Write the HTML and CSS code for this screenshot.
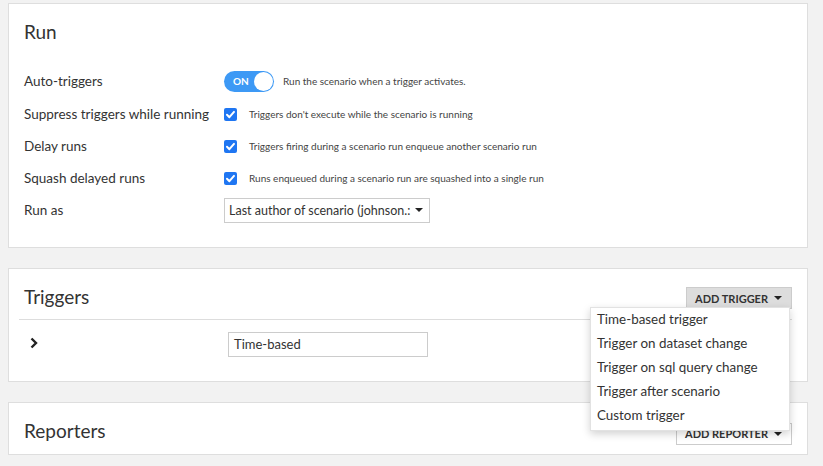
FILE: index.html
```html
<!DOCTYPE html>
<html>
<head>
<meta charset="utf-8">
<link rel="stylesheet" href="styles.css">
</head>
<body>
<div class="page">
  <section class="panel run">
    <h2 class="title">Run</h2>
    <div class="rows">
      <div class="row">
        <div class="label">Auto-triggers</div>
        <div class="ctrl">
          <span class="toggle"><span class="on">ON</span><span class="knob"></span></span>
          <span class="desc toggle-desc">Run the scenario when a trigger activates.</span>
        </div>
      </div>
      <div class="row">
        <div class="label">Suppress triggers while running</div>
        <div class="ctrl">
          <span class="check"><svg viewBox="0 0 13 13" width="13" height="13"><path d="M3 6.8 L5.4 9.2 L10 3.9" fill="none" stroke="#fff" stroke-width="2" stroke-linecap="round" stroke-linejoin="round"/></svg></span>
          <span class="desc">Triggers don't execute while the scenario is running</span>
        </div>
      </div>
      <div class="row">
        <div class="label">Delay runs</div>
        <div class="ctrl">
          <span class="check"><svg viewBox="0 0 13 13" width="13" height="13"><path d="M3 6.8 L5.4 9.2 L10 3.9" fill="none" stroke="#fff" stroke-width="2" stroke-linecap="round" stroke-linejoin="round"/></svg></span>
          <span class="desc">Triggers firing during a scenario run enqueue another scenario run</span>
        </div>
      </div>
      <div class="row">
        <div class="label">Squash delayed runs</div>
        <div class="ctrl">
          <span class="check"><svg viewBox="0 0 13 13" width="13" height="13"><path d="M3 6.8 L5.4 9.2 L10 3.9" fill="none" stroke="#fff" stroke-width="2" stroke-linecap="round" stroke-linejoin="round"/></svg></span>
          <span class="desc">Runs enqueued during a scenario run are squashed into a single run</span>
        </div>
      </div>
      <div class="row">
        <div class="label">Run as</div>
        <div class="ctrl">
          <div class="select"><span class="select-text">Last author of scenario (johnson.:</span><span class="caret"></span></div>
        </div>
      </div>
    </div>
  </section>

  <section class="panel triggers">
    <div class="head">
      <h2 class="title">Triggers</h2>
      <div class="btn-wrap">
        <button class="btn grey"><span>ADD TRIGGER</span><span class="caret"></span></button>
        <ul class="menu">
          <li>Time-based trigger</li>
          <li>Trigger on dataset change</li>
          <li>Trigger on sql query change</li>
          <li>Trigger after scenario</li>
          <li>Custom trigger</li>
        </ul>
      </div>
    </div>
    <div class="trigger-row">
      <svg class="chev" viewBox="0 0 10 12" width="10" height="12"><path d="M2.5 1.5 L7 6 L2.5 10.5" fill="none" stroke="#222" stroke-width="2.4"/></svg>
      <div class="input">Time-based</div>
    </div>
  </section>

  <section class="panel reporters">
    <div class="head">
      <h2 class="title">Reporters</h2>
      <button class="btn white"><span>ADD REPORTER</span><span class="caret"></span></button>
    </div>
  </section>
</div>
</body>
</html>
```
FILE: styles.css
```css
* { box-sizing: border-box; }
html, body { margin: 0; padding: 0; }
body {
  background: #f2f2f2;
  font-family: "Source Sans Pro", Lato, "Liberation Sans", sans-serif;
  color: #333;
  width: 823px;
  height: 466px;
  overflow: hidden;
}
.page {
  padding: 3px 16px 0 8px;
  display: flex;
  flex-direction: column;
  gap: 20px;
}
.panel {
  width: 800px;
  background: #fff;
  border: 1px solid #dedede;
}
.title {
  margin: 0;
  font-size: 19px;
  font-weight: 400;
  color: #333;
  line-height: 24px;
}
.run { height: 245px; padding: 16px 15px 0 15px; }
.rows { margin-top: 20px; display: flex; flex-direction: column; }
.row {
  display: flex;
  align-items: center;
  height: 32px;
}
.row:first-child { height: 34px; }
.label {
  width: 200px;
  font-size: 13.5px;
  color: #333;
  white-space: nowrap;
}
.ctrl { display: flex; align-items: center; }
.toggle {
  width: 50px;
  height: 21px;
  border-radius: 11px;
  background: #3d99f5;
  position: relative;
  display: inline-flex;
  align-items: center;
}
.toggle .on {
  color: #fff;
  font-size: 10px;
  font-weight: 700;
  margin-left: 9px;
}
.toggle .knob {
  position: absolute;
  right: 1px;
  top: 1px;
  width: 19px;
  height: 19px;
  border-radius: 50%;
  background: #fff;
}
.toggle-desc { margin-left: 9px; }
.desc {
  font-size: 10px;
  color: #444;
  white-space: nowrap;
}
.check {
  width: 13px;
  height: 13px;
  background: #1f76f2;
  border-radius: 2px;
  display: inline-flex;
  margin-right: 12px;
}
.check svg { display: block; }
.select {
  width: 206px;
  height: 25px;
  border: 1px solid #ccc;
  display: flex;
  align-items: center;
  justify-content: space-between;
  padding: 0 6px 0 4px;
  font-size: 12.5px;
  color: #333;
  white-space: nowrap;
  overflow: hidden;
}
.caret {
  display: inline-block;
  width: 0;
  height: 0;
  border-left: 4px solid transparent;
  border-right: 4px solid transparent;
  border-top: 4px solid #222;
  vertical-align: middle;
  flex: none;
}
.triggers { height: 114px; padding: 0 15px 0 10px; }
.head {
  display: flex;
  justify-content: space-between;
  align-items: center;
  height: 51px;
  padding-left: 5px;
}
.triggers .head { border-bottom: 1px solid #ddd; }
.triggers .title, .reporters .title { padding-top: 5px; }
.btn-wrap { position: relative; margin-top: 8px; }
.btn {
  font-family: inherit;
  font-size: 11px;
  font-weight: 700;
  color: #333;
  height: 22px;
  display: flex;
  align-items: center;
  justify-content: space-between;
  padding: 0 9px 0 8px;
  border-radius: 0;
  white-space: nowrap;
}
.btn.grey { background: #ddd; border: 1px solid #ccc; width: 106px; }
.btn.white { background: #fff; border: 1px solid #ccc; width: 116px; margin-top: 10px; }
.menu {
  position: absolute;
  right: 2px;
  top: 20px;
  width: 200px;
  margin: 0;
  list-style: none;
  background: #fff;
  border: 1px solid #e2e2e2;
  box-shadow: 0 3px 8px rgba(0,0,0,0.18);
  z-index: 5;
  padding: 0 0 2px;
}
.menu li {
  font-size: 13.4px;
  color: #333;
  height: 24px;
  line-height: 23px;
  padding-left: 6px;
}
.trigger-row {
  display: flex;
  align-items: center;
  height: 48px;
}
.chev { margin-left: 10px; margin-bottom: 2px; }
.input {
  margin-left: 189px;
  width: 200px;
  height: 25px;
  border: 1px solid #ccc;
  font-size: 13px;
  padding: 0 5px;
  display: flex;
  align-items: center;
}
.reporters { height: 53px; padding: 0 15px 0 10px; }
```
